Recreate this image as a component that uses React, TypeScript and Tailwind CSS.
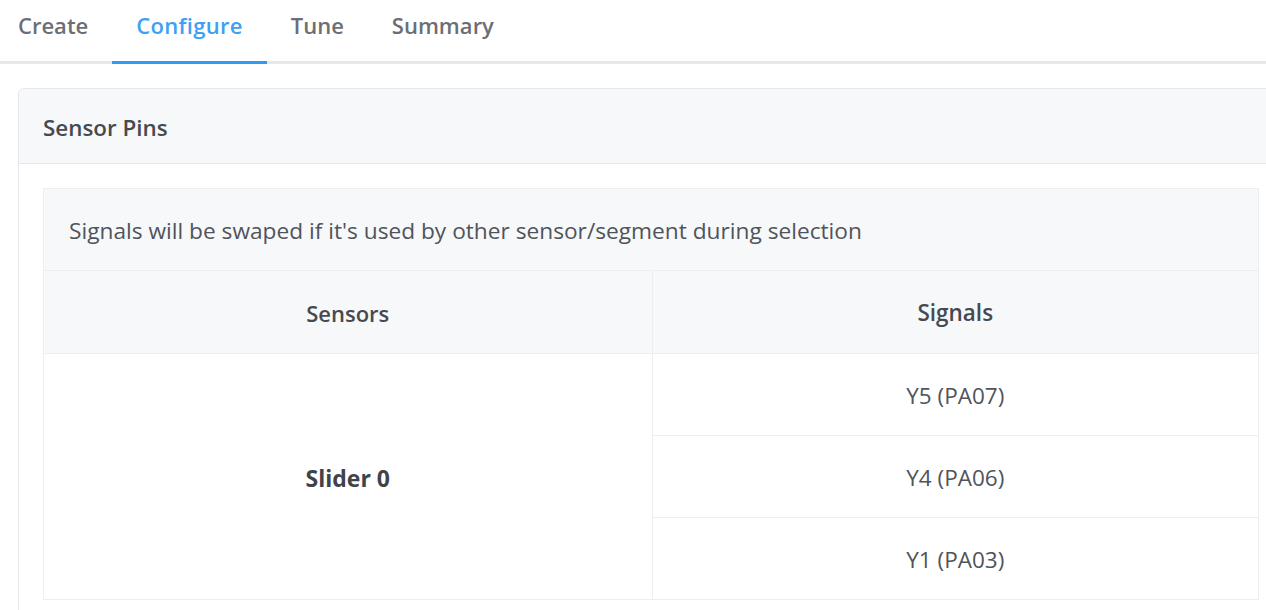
const tabs = ["Create", "Configure", "Tune", "Summary"];
const signals = ["Y5 (PA07)", "Y4 (PA06)", "Y1 (PA03)"];

export default function App() {
  return (
    <div
      className="h-[610px] w-[1266px] overflow-hidden bg-white text-[#4b4f56]"
      style={{ fontFamily: '"Open Sans", "Noto Sans", sans-serif' }}
    >
      {/* Tabs */}
      <div className="flex h-[64px] border-b-[3px] border-[#e6e8ec]">
        <div className="-ml-[6px] flex">
          {tabs.map((t) => (
            <div
              key={t}
              className={
                t === "Configure"
                  ? "-mb-[3px] flex h-[64px] items-start border-b-[3px] border-[#2f9bf4] px-[24px] pt-[9px] text-[22px] font-semibold tracking-[0.3px] text-[#3ca0f5]"
                  : "flex h-[61px] items-start px-[24px] pt-[9px] text-[22px] font-semibold text-[#6b6f75]"
              }
            >
              {t}
            </div>
          ))}
        </div>
      </div>

      {/* Card */}
      <div className="ml-[18px] mt-[24px] w-[1290px] rounded-tl-[6px] border border-[#e3e6ea]">
        <div className="flex h-[75px] items-center rounded-tl-[6px] border-b border-[#e3e6ea] bg-[#f7f8fa] px-[24px] pt-[3px] text-[22.4px] font-semibold text-[#464a50]">
          Sensor Pins
        </div>
        <div className="px-[24px] pt-[24px] pb-[20px]">
          <div className="w-[1216px] border border-[#eceef1]">
            <div className="flex h-[82px] items-center border-b border-[#eceef1] bg-[#f7f8fa] px-[25px] pt-[4px] text-[22.7px] text-[#50545a]">
              Signals will be swaped if it's used by other sensor/segment during selection
            </div>
            <table className="w-full table-fixed border-collapse text-[22.5px]">
              <thead>
                <tr className="h-[82px] bg-[#f7f8fa]">
                  <th className="w-[608px] border-r border-b border-[#eceef1] pt-[3px] text-[22px] font-semibold text-[#464a50]">
                    Sensors
                  </th>
                  <th className="border-b border-[#eceef1] pt-[3px] text-[22.5px] font-semibold text-[#464a50]">
                    Signals
                  </th>
                </tr>
              </thead>
              <tbody>
                {signals.map((s, i) => (
                  <tr key={s} className="h-[82px]">
                    {i === 0 && (
                      <td
                        rowSpan={3}
                        className="border-r border-[#eceef1] pt-[3px] text-center text-[23px] font-bold text-[#3f434a]"
                      >
                        Slider 0
                      </td>
                    )}
                    <td
                      className={
                        i < signals.length - 1
                          ? "border-b border-[#eceef1] pt-[3px] text-center text-[#50545a]"
                          : "pt-[3px] text-center text-[#50545a]"
                      }
                    >
                      {s}
                    </td>
                  </tr>
                ))}
              </tbody>
            </table>
          </div>
        </div>
      </div>
    </div>
  );
}
